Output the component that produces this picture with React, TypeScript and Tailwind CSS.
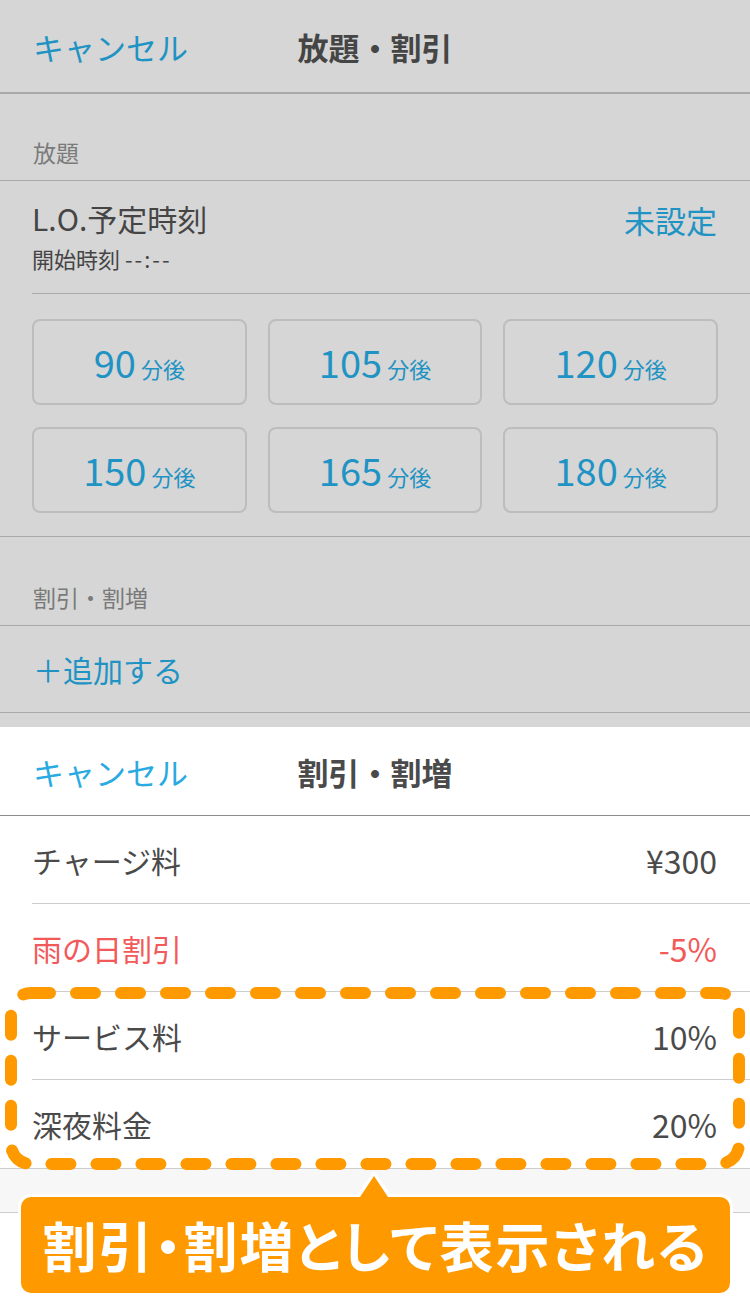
import React from "react";

const font = "font-['Noto_Sans_CJK_JP','Noto_Sans',sans-serif]";

function TimeButton({ n }: { n: string }) {
  return (
    <div className="flex h-[86px] items-center justify-center rounded-[8px] border-2 border-[#bdbdbd]">
      <div className="flex items-baseline gap-[5px] text-[#1f93c3]">
        <span className="text-[38px] leading-none">{n}</span>
        <span className="text-[22px] leading-none">分後</span>
      </div>
    </div>
  );
}

function SheetRow({ label, value, red, last }: { label: string; value: string; red?: boolean; last?: boolean }) {
  return (
    <div className={`flex h-[88px] items-center justify-between pr-[33px] ${last ? "" : "border-b border-[#cdcdcd]"} ${red ? "text-[#f25a5a]" : "text-[#4a4a4a]"}`}>
      <span className="text-[30px] leading-none">{label}</span>
      <span className="text-[32px] leading-none">{value}</span>
    </div>
  );
}

export default function App() {
  return (
    <div className={`relative w-[750px] h-[1300px] overflow-hidden bg-white ${font}`}>
      {/* dimmed background page */}
      <div className="flex h-[727px] flex-col bg-[#d6d6d6]">
        <div className="relative flex h-[94px] items-center border-b-2 border-[#a9a9a9] pl-[33px]">
          <span className="text-[31px] leading-none text-[#1f93c3]">キャンセル</span>
          <span className="absolute left-0 right-0 text-center text-[31px] font-bold leading-none text-[#454545]">放題・割引</span>
        </div>
        <div className="flex h-[87px] items-end border-b border-[#a9a9a9] pb-[16px] pl-[33px]">
          <span className="text-[23px] leading-none text-[#7a7a7a]">放題</span>
        </div>
        <div className="pl-[32px]">
          <div className="flex h-[113px] items-start justify-between border-b border-[#a9a9a9] pr-[33px] pt-[20px]">
            <div className="flex flex-col gap-[10px]">
              <span className="text-[30px] leading-[34px] text-[#454545]">L.O.予定時刻</span>
              <span className="text-[22px] leading-[26px] text-[#454545]">
                開始時刻 <span className="tracking-[2px]">--:--</span>
              </span>
            </div>
            <span className="pt-[2px] text-[31px] leading-[34px] text-[#1f93c3]">未設定</span>
          </div>
        </div>
        <div className="grid grid-cols-3 gap-x-[21px] gap-y-[22px] border-b border-[#a9a9a9] px-[32px] pb-[23px] pt-[25px]">
          {["90", "105", "120", "150", "165", "180"].map((n) => (
            <TimeButton key={n} n={n} />
          ))}
        </div>
        <div className="flex h-[89px] items-end border-b border-[#a9a9a9] pb-[16px] pl-[33px]">
          <span className="text-[23px] leading-none text-[#7a7a7a]">割引・割増</span>
        </div>
        <div className="flex h-[87px] items-center border-b border-[#a9a9a9] pl-[33px]">
          <span className="text-[30px] leading-none text-[#1f93c3]">＋追加する</span>
        </div>
      </div>

      {/* sheet */}
      <div className="flex flex-col bg-white">
        <div className="relative flex h-[89px] items-center border-b border-[#8c8c8c] pl-[33px]">
          <span className="text-[31px] leading-none text-[#29aae2]">キャンセル</span>
          <span className="absolute left-0 right-0 text-center text-[31px] font-bold leading-none text-[#4a4a4a]">割引・割増</span>
        </div>
        <div className="pl-[32px]">
          <SheetRow label="チャージ料" value="¥300" />
          <SheetRow label="雨の日割引" value="-5%" red />
          <SheetRow label="サービス料" value="10%" />
          <SheetRow label="深夜料金" value="20%" last />
        </div>
        <div className="h-[45px] border-y border-[#cdcdcd] bg-[#f7f7f7]" />
      </div>

      {/* dashed highlight */}
      <svg className="absolute left-0 top-[985px]" width="750" height="190" viewBox="0 0 750 190">
        <rect
          x="11"
          y="8"
          width="728"
          height="171"
          rx="20"
          fill="none"
          stroke="#ff9900"
          strokeWidth="12"
          strokeLinecap="round"
          strokeDasharray="19 26"
        />
      </svg>

      {/* callout */}
      <div className="absolute left-[21px] top-[1197px] flex h-[96px] w-[709px] items-center justify-center rounded-[10px] bg-[#ff9900] shadow-[0_0_0_3px_#ffffff]">
        <span className="text-[54px] font-bold leading-none tracking-[2px] text-white [font-feature-settings:'palt']">割引・割増として表示される</span>
      </div>
      <svg className="absolute left-[350px] top-[1170px]" width="50" height="34" viewBox="0 0 50 34">
        <polygon points="24,1 5,27 43,27" fill="#ffffff" />
        <polygon points="24,6 8,30 40,30" fill="#ff9900" />
      </svg>
    </div>
  );
}
